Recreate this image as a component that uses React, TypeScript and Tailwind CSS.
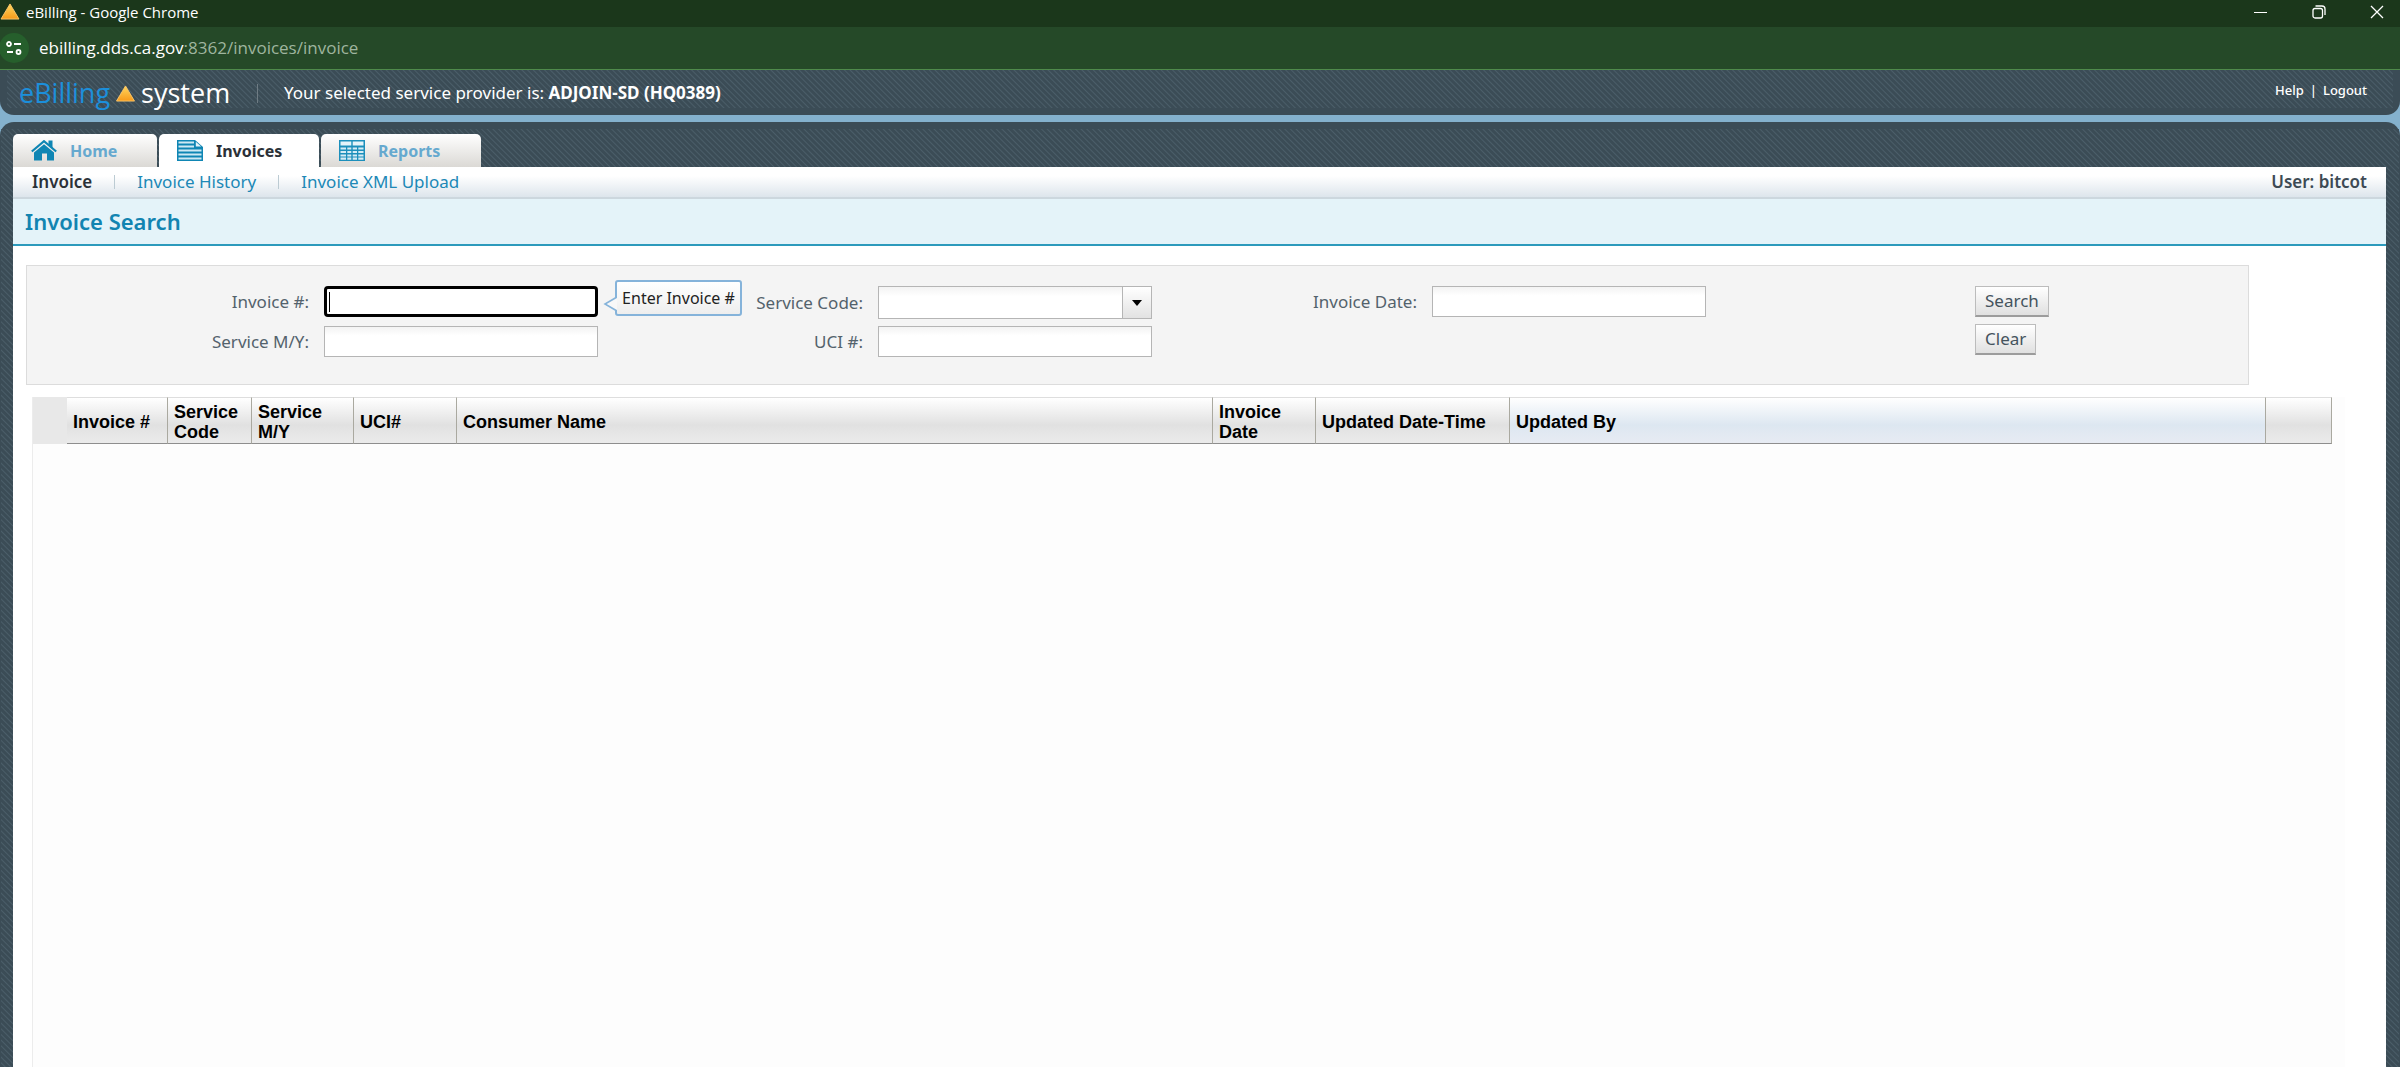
import { useState, type ReactNode } from "react";

const MENU = [
  { label: "Home", icon: <HomeIcon />, active: false, width: "w-36" },
  { label: "Invoices", icon: <InvoiceIcon />, active: true, width: "w-40" },
  { label: "Reports", icon: <ReportIcon />, active: false, width: "w-40" },
];

const SUB_MENU = ["Invoice", "Invoice History", "Invoice XML Upload"];

const COLUMNS = [
  { label: "Invoice #", width: "w-[101px]" },
  { label: "Service Code", width: "w-[84px]" },
  { label: "Service M/Y", width: "w-[102px]" },
  { label: "UCI#", width: "w-[103px]" },
  { label: "Consumer Name", width: "" },
  { label: "Invoice Date", width: "w-[103px]" },
  { label: "Updated Date-Time", width: "w-[194px]" },
  { label: "Updated By", width: "", hover: true },
  { label: "", width: "w-[66px]" },
];

const STRIPES =
  "bg-[repeating-linear-gradient(45deg,#3b4c56_0px,#3b4c56_2px,#4b5e69_3px,#3b4c56_4px)]";

const INPUT =
  "h-[31px] w-full border border-[#b5b5b5] bg-linear-to-b from-[#f3f3f3] to-white to-30% px-1 text-[17px] text-black";

function WarningIcon({ className }: { className: string }) {
  return (
    <svg viewBox="0 0 20 18" className={className} aria-hidden="true">
      <defs>
        <linearGradient id="amber" x1="0" y1="0" x2="0" y2="1">
          <stop offset="0" stopColor="#ffd75e" />
          <stop offset="1" stopColor="#f79a1a" />
        </linearGradient>
      </defs>
      <path d="M10 1 L19.5 17 H0.5 Z" fill="url(#amber)" stroke="#fbc66a" strokeLinejoin="round" />
    </svg>
  );
}

function HomeIcon() {
  return (
    <svg viewBox="0 0 26 21" className="h-[21px] w-[26px]" aria-hidden="true">
      <path d="M17.5 0.5 H21.5 V8.5 L17.5 5 Z" fill="#0f86b4" />
      <path d="M0.8 11.5 L13 1.2 L25.2 11.5" fill="none" stroke="#0f86b4" strokeWidth="2.2" />
      <path d="M3 12.6 L13 4.3 L23 12.6 V20.5 H16 V13.5 H11 V20.5 H3 Z" fill="#0f86b4" />
    </svg>
  );
}

function InvoiceIcon() {
  return (
    <svg viewBox="0 0 26 21" className="h-[21px] w-[26px]" aria-hidden="true">
      <path d="M0 0 H18 L26 7 V21 H0 Z" fill="#0f86b4" />
      <path d="M18.8 1.8 L24.2 6.4 H18.8 Z" fill="#e4f3f9" />
      <path
        d="M1.5 2.5 H17 M1.5 6.5 H17 M1.5 10.5 H24.5 M1.5 14.5 H24.5 M1.5 18.5 H24.5"
        stroke="#cfe9f3"
        strokeWidth="2"
      />
    </svg>
  );
}

function ReportIcon() {
  return (
    <svg viewBox="0 0 26 21" className="h-[21px] w-[26px]" aria-hidden="true">
      <path d="M0 0 H26 V21 H0 Z" fill="#1c8fbb" />
      <path d="M1.5 1.5 H12.3 V5.5 H1.5 Z M13.7 1.5 H24.5 V5.5 H13.7 Z" fill="#e4f3f9" />
      <path
        d="M1.5 8.5 H7 M8.3 8.5 H12.3 M13.7 8.5 H18 M19.3 8.5 H24.5 M1.5 12 H7 M8.3 12 H12.3 M13.7 12 H18 M19.3 12 H24.5 M1.5 15.5 H7 M8.3 15.5 H12.3 M13.7 15.5 H18 M19.3 15.5 H24.5 M1.5 18.7 H7 M8.3 18.7 H12.3 M13.7 18.7 H18 M19.3 18.7 H24.5"
        stroke="#d5ecf5"
        strokeWidth="2.2"
      />
    </svg>
  );
}

function BrowserBar() {
  return (
    <div className="font-['Open_Sans','Noto_Sans',sans-serif] text-white">
      <div className="flex h-[27px] items-center justify-between bg-[#1b371b] pr-4 pb-1">
        <div className="flex items-center gap-[6px]">
          <WarningIcon className="h-[17px] w-5" />
          <span className="text-[15px] leading-5">eBilling - Google Chrome</span>
        </div>
        <div className="flex items-center gap-11">
          <button aria-label="Minimize" className="h-[14px] w-[14px]">
            <svg viewBox="0 0 14 14" stroke="#fff" fill="none">
              <path d="M0 7.5 H13" />
            </svg>
          </button>
          <button aria-label="Restore" className="h-[14px] w-[14px]">
            <svg viewBox="0 0 14 14" stroke="#fff" fill="none" strokeWidth="1.3">
              <rect x="1" y="3.5" width="9.5" height="9.5" rx="2" />
              <path d="M3.5 1 H10 Q13 1 13 4 V10" />
            </svg>
          </button>
          <button aria-label="Close" className="h-[14px] w-[14px]">
            <svg viewBox="0 0 14 14" stroke="#fff" fill="none" strokeWidth="1.3">
              <path d="M1 1 L13 13 M13 1 L1 13" />
            </svg>
          </button>
        </div>
      </div>
      <div className="flex h-[43px] items-center gap-[10px] border-b border-[#4f8a4b] bg-[#254928]">
        <button
          aria-label="View site information"
          className="-ml-px flex size-[30px] items-center justify-center rounded-full bg-[#265f2c]"
        >
          <svg viewBox="0 0 16 16" className="size-4" stroke="#fff" strokeWidth="1.8" fill="none">
            <circle cx="3" cy="4" r="2" />
            <path d="M8 4 H15 M1 12 H7" />
            <circle cx="12.5" cy="12" r="2" />
          </svg>
        </button>
        <span className="text-[17px] leading-6">
          ebilling.dds.ca.gov<span className="text-[#9fb59f]">:8362/invoices/invoice</span>
        </span>
      </div>
    </div>
  );
}

function Header() {
  return (
    <header className="bg-[#84b1cd] pb-[7px]">
      <div className="rounded-b-[14px] bg-[#3b4c56] px-[7px] pb-[7px]">
        <div className={`flex h-[38px] items-center justify-between pr-[26px] pl-3 ${STRIPES}`}>
          <div className="flex items-center pt-2">
            <div className="flex w-[212px] items-center gap-[6px] font-['Open_Sans',sans-serif] text-[27px] leading-8">
              <span className="text-[#1c8fdb]">eBilling</span>
              <WarningIcon className="h-[17px] w-[19px]" />
              <span className="text-white">system</span>
            </div>
            <div className="mx-[26px] h-[19px] w-px bg-[#6f7c84]" />
            <p className="text-[17px] leading-6 text-white">
              Your selected service provider is: <strong>ADJOIN-SD (HQ0389)</strong>
            </p>
          </div>
          <nav className="flex gap-[6px] pt-px text-[13px] leading-5 font-medium text-white">
            <a href="#help">Help</a>
            <span>|</span>
            <a href="#logout">Logout</a>
          </nav>
        </div>
      </div>
    </header>
  );
}

function Field({ id, label, children }: { id: string; label: string; children: ReactNode }) {
  return (
    <div className="flex items-center">
      <label htmlFor={id} className="w-72 shrink-0 pr-[15px] text-right text-[17px] leading-6 text-[#53626c]">
        {label}
      </label>
      <div className="relative w-[274px] shrink-0">{children}</div>
    </div>
  );
}

function SearchForm() {
  const [invoice, setInvoice] = useState("");
  return (
    <form className="mr-[137px] ml-[13px] h-[120px] border border-[#dcdcdc] bg-[#f4f4f4] pt-5">
      <div className="flex items-start">
        <div className="flex w-[554px] flex-col gap-[9px] pl-[9px]">
          <Field id="invoice" label="Invoice #:">
            <input
              id="invoice"
              autoFocus
              value={invoice}
              onChange={(e) => setInvoice(e.target.value)}
              className="h-[31px] w-full rounded-[4px] border-[3px] border-black bg-white px-1 text-[17px] caret-transparent outline-none"
            />
            {invoice === "" && <div className="pointer-events-none absolute top-[6px] left-[5px] h-5 w-px bg-black" />}
            <div
              role="tooltip"
              className="absolute -top-[6px] left-[291px] z-10 flex h-9 w-[127px] items-center justify-center rounded-[3px] border-2 border-[#85b3da] bg-linear-to-b from-white to-[#eeeeee] text-base whitespace-nowrap text-[#222]"
            >
              Enter Invoice #
              <svg viewBox="0 0 14 16" className="absolute top-[14px] -left-[14px] h-4 w-[14px]" aria-hidden="true">
                <path d="M14 1 L2 8 L14 15" fill="#f8f8f8" stroke="#85b3da" strokeWidth="1.6" />
              </svg>
            </div>
          </Field>
          <Field id="service-my" label="Service M/Y:">
            <input id="service-my" className={INPUT} />
          </Field>
        </div>
        <div className="flex w-[554px] flex-col gap-[7px] pl-[9px]">
          <Field id="service-code" label="Service Code:">
            <select
              id="service-code"
              className="block h-[33px] w-full appearance-none border border-[#b5b5b5] bg-linear-to-b from-[#f3f3f3] to-white to-30% px-1"
            >
              <option value=""></option>
            </select>
            <div className="pointer-events-none absolute top-px right-px flex h-[31px] w-[29px] items-center justify-center border-l border-[#b5b5b5] bg-linear-to-b from-white to-[#e2e2e2]">
              <svg viewBox="0 0 10 6" className="h-[6px] w-[10px]" aria-hidden="true">
                <path d="M0 0 H10 L5 6 Z" />
              </svg>
            </div>
          </Field>
          <Field id="uci" label="UCI #:">
            <input id="uci" className={INPUT} />
          </Field>
        </div>
        <div className="w-[554px] pl-[9px]">
          <Field id="invoice-date" label="Invoice Date:">
            <input id="invoice-date" className={INPUT} />
          </Field>
        </div>
        <div className="ml-[286px] flex flex-col items-start gap-[7px]">
          <FormButton label="Search" />
          <FormButton label="Clear" />
        </div>
      </div>
    </form>
  );
}

function FormButton({ label }: { label: string }) {
  return (
    <button
      type="button"
      className="h-[31px] border border-b-2 border-[#bcbcbc] border-b-[#9c9c9c] bg-linear-to-b from-white to-[#e0e0e0] px-[9px] text-[17px] leading-6 text-[#44535d]"
    >
      {label}
    </button>
  );
}

function InvoiceTable() {
  return (
    <div className="mt-3 mr-[41px] ml-[19px] flex-1 border-l border-[#ececec] bg-[#fdfdfd] pr-[13px]">
      <table className="w-full table-fixed border-separate border-spacing-0 font-['Liberation_Sans',Arial,sans-serif]">
        <thead>
          <tr className="h-[47px]">
            <td className="w-[34px] bg-[#e8e8e8]" />
            {COLUMNS.map((col) => (
              <th
                key={col.label}
                className={`border-t border-r border-b border-t-[#dedede] border-r-[#aaa9a0] border-b-[#8e8e8e] bg-linear-to-b pt-[2px] pr-1 pl-[6px] text-left align-middle text-[18px] leading-5 font-bold text-black ${col.width} ${
                  col.hover
                    ? "from-white via-[#dde7f1] via-60% to-[#e7ebf3]"
                    : "from-white via-[#e1e1e1] via-60% to-[#ebebeb]"
                }`}
              >
                {col.label}
              </th>
            ))}
          </tr>
        </thead>
      </table>
    </div>
  );
}

export default function App() {
  return (
    <div className="flex min-h-screen flex-col font-['Noto_Sans','Open_Sans',sans-serif]">
      <BrowserBar />
      <Header />
      <div className="flex flex-1 flex-col bg-[#84b1cd]">
        <div className="flex flex-1 flex-col rounded-t-[14px] bg-[#3b4c56] px-px pt-[7px]">
          <div className={`flex flex-1 flex-col pt-[5px] pr-[13px] pl-3 ${STRIPES}`}>
            <nav className="flex gap-[2px]">
              {MENU.map((item) => (
                <a
                  key={item.label}
                  href={`#${item.label}`}
                  className={`flex h-[33px] items-center gap-[13px] rounded-t-[5px] bg-linear-to-b pl-[18px] text-base font-bold ${item.width} ${
                    item.active
                      ? "from-white to-white text-[#2b3138]"
                      : "from-white to-[#dbd9d5] text-[#66a9cf]"
                  }`}
                >
                  {item.icon}
                  {item.label}
                </a>
              ))}
            </nav>
            <main className="flex flex-1 flex-col bg-white">
              <div className="flex h-8 items-center justify-between border-b-2 border-[#ccd7de] bg-linear-to-b from-white from-30% to-[#dde5ec] px-[19px] text-[17px] leading-6">
                <div className="flex items-center">
                  {SUB_MENU.map((item, i) => (
                    <div key={item} className="flex items-center">
                      {i > 0 && <div className="mx-[22px] h-[14px] w-px bg-[#bccbd3]" />}
                      <a href="#" className={i === 0 ? "font-semibold text-[#2b3138]" : "text-[#2088b6]"}>
                        {item}
                      </a>
                    </div>
                  ))}
                </div>
                <span className="font-semibold text-[#3d4a54]">User: bitcot</span>
              </div>
              <div className="mb-[19px] flex h-[47px] items-center border-b-2 border-[#2c9abc] bg-[#e4f3f9] px-3 pb-[2px]">
                <h1 className="text-[22px] leading-7 font-semibold text-[#1284b1]">Invoice Search</h1>
              </div>
              <SearchForm />
              <InvoiceTable />
            </main>
          </div>
        </div>
      </div>
    </div>
  );
}
